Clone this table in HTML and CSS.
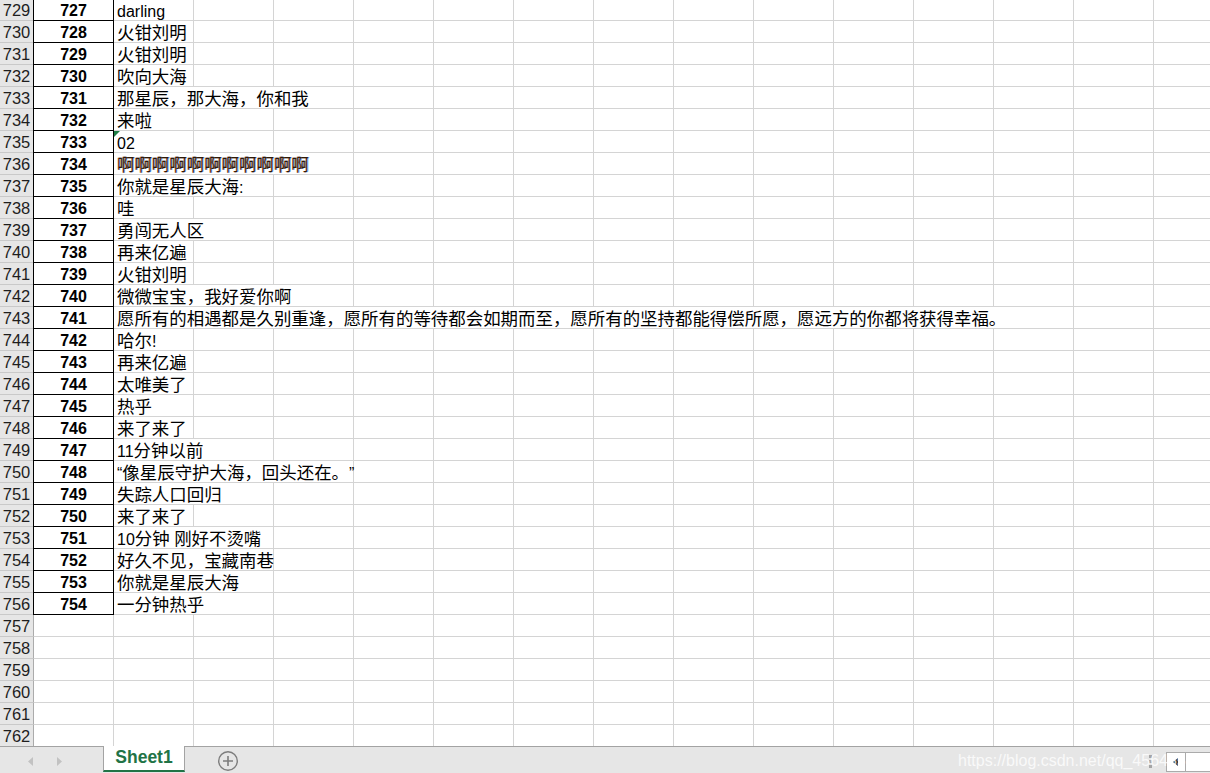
FILE: index.html
```html
<!DOCTYPE html>
<html lang="zh">
<head>
<meta charset="utf-8">
<title>Sheet1</title>
<link rel="stylesheet" href="styles.css">
</head>
<body>
<div class="app">
  <div class="sheet">
    <div class="rows">
      <div class="row"><div class="rh">729</div><div class="a">727</div><div class="b"><span class="lat">darling</span></div></div>
      <div class="row"><div class="rh">730</div><div class="a">728</div><div class="b">火钳刘明</div></div>
      <div class="row"><div class="rh">731</div><div class="a">729</div><div class="b">火钳刘明</div></div>
      <div class="row"><div class="rh">732</div><div class="a">730</div><div class="b">吹向大海</div></div>
      <div class="row"><div class="rh">733</div><div class="a">731</div><div class="b span3">那星辰，那大海，你和我</div></div>
      <div class="row"><div class="rh">734</div><div class="a">732</div><div class="b">来啦</div></div>
      <div class="row"><div class="rh">735</div><div class="a">733</div><div class="b flag"><span class="lat">02</span></div></div>
      <div class="row"><div class="rh">736</div><div class="a">734</div><div class="b span3 fringe">啊啊啊啊啊啊啊啊啊啊啊</div></div>
      <div class="row"><div class="rh">737</div><div class="a">735</div><div class="b span2">你就是星辰大海<span class="lat">:</span></div></div>
      <div class="row"><div class="rh">738</div><div class="a">736</div><div class="b">哇</div></div>
      <div class="row"><div class="rh">739</div><div class="a">737</div><div class="b span2">勇闯无人区</div></div>
      <div class="row"><div class="rh">740</div><div class="a">738</div><div class="b">再来亿遍</div></div>
      <div class="row"><div class="rh">741</div><div class="a">739</div><div class="b">火钳刘明</div></div>
      <div class="row"><div class="rh">742</div><div class="a">740</div><div class="b span3">微微宝宝，我好爱你啊</div></div>
      <div class="row"><div class="rh">743</div><div class="a">741</div><div class="b span12">愿所有的相遇都是久别重逢，愿所有的等待都会如期而至，愿所有的坚持都能得偿所愿，愿远方的你都将获得幸福。</div></div>
      <div class="row"><div class="rh">744</div><div class="a">742</div><div class="b">哈尔<span class="lat">!</span></div></div>
      <div class="row"><div class="rh">745</div><div class="a">743</div><div class="b">再来亿遍</div></div>
      <div class="row"><div class="rh">746</div><div class="a">744</div><div class="b">太唯美了</div></div>
      <div class="row"><div class="rh">747</div><div class="a">745</div><div class="b">热乎</div></div>
      <div class="row"><div class="rh">748</div><div class="a">746</div><div class="b">来了来了</div></div>
      <div class="row"><div class="rh">749</div><div class="a">747</div><div class="b span2"><span class="lat">11</span>分钟以前</div></div>
      <div class="row"><div class="rh">750</div><div class="a">748</div><div class="b span3"><span class="lat">“</span>像星辰守护大海，回头还在。<span class="lat">”</span></div></div>
      <div class="row"><div class="rh">751</div><div class="a">749</div><div class="b span2">失踪人口回归</div></div>
      <div class="row"><div class="rh">752</div><div class="a">750</div><div class="b">来了来了</div></div>
      <div class="row"><div class="rh">753</div><div class="a">751</div><div class="b span2"><span class="lat">10</span>分钟<span class="lat"> </span>刚好不烫嘴</div></div>
      <div class="row"><div class="rh">754</div><div class="a">752</div><div class="b span2">好久不见，宝藏南巷</div></div>
      <div class="row"><div class="rh">755</div><div class="a">753</div><div class="b span2">你就是星辰大海</div></div>
      <div class="row"><div class="rh">756</div><div class="a">754</div><div class="b span2">一分钟热乎</div></div>
      <div class="row"><div class="rh">757</div><div class="a empty"></div></div>
      <div class="row"><div class="rh">758</div><div class="a empty"></div></div>
      <div class="row"><div class="rh">759</div><div class="a empty"></div></div>
      <div class="row"><div class="rh">760</div><div class="a empty"></div></div>
      <div class="row"><div class="rh">761</div><div class="a empty"></div></div>
      <div class="row"><div class="rh">762</div><div class="a empty"></div></div>
    </div>
  </div>
  <div class="tabbar">
    <div class="nav">
      <svg width="103" height="26" viewBox="0 0 103 26"><polygon points="33,10 28,14.5 33,19" fill="#c2c2c2"/><polygon points="57,10 62,14.5 57,19" fill="#c2c2c2"/></svg>
    </div>
    <div class="tab">Sheet1</div>
    <div class="add">
      <svg width="22" height="22" viewBox="0 0 22 22"><circle cx="11" cy="11" r="9.3" fill="none" stroke="#7d7d7d" stroke-width="1.4"/><path d="M11 6v10M6 11h10" stroke="#7d7d7d" stroke-width="1.6"/></svg>
    </div>
    <div class="right">
      <div class="dots"><i></i><i></i><i></i></div>
      <div class="hscroll">
        <div class="hbtn"><svg width="8" height="10" viewBox="0 0 8 10"><polygon points="6,1 1,5 6,9" fill="#3d3d3d"/></svg></div>
        <div class="hthumb"></div>
      </div>
    </div>
    <div class="watermark">https://blog.csdn.net/qq_45645521</div>
  </div>
</div>
</body>
</html>
```

FILE: styles.css
```css
* { box-sizing: border-box; }
html, body { margin: 0; padding: 0; }
body {
  width: 1210px;
  height: 773px;
  overflow: hidden;
  background: #ffffff;
  font-family: "Liberation Sans", "Noto Sans CJK SC", sans-serif;
  text-spacing-trim: space-all;
}
.app {
  display: flex;
  flex-direction: column;
  height: 773px;
}
.sheet {
  height: 746px;
  overflow: hidden;
  flex: none;
}
.rows {
  margin-top: -1px;
}
.row {
  display: grid;
  grid-template-columns: 33px 81px repeat(14, 80px);
  grid-template-rows: 22px;
  height: 22px;
  width: 1210px;
  background-image:
    linear-gradient(to top, #d4d4d4 1px, transparent 1px),
    repeating-linear-gradient(to right, transparent 0 79px, #d4d4d4 79px 80px);
  background-position: 0 0, 34px 0;
}
.rh {
  height: 22px;
  background: #e6e6e6;
  border-bottom: 1px solid #c9c9c9;
  color: #1e1e1e;
  font-size: 16.5px;
  line-height: 19px;
  padding-top: 2px;
  text-align: center;
}
.a {
  height: 22px;
  border-left: 1px solid #000;
  border-right: 1px solid #000;
  border-bottom: 1px solid #000;
  background: #fff;
  font-weight: bold;
  font-size: 16px;
  line-height: 20px;
  padding-top: 1.5px;
  text-align: center;
  color: #000;
}
.a.empty {
  border-left-color: #ababab;
  border-right: none;
  border-bottom-color: #d4d4d4;
  background: transparent;
}
.b {
  position: relative;
  height: 22px;
  background: #fff;
  border-right: 1px solid #d4d4d4;
  border-bottom: 1px solid #d4d4d4;
  padding-left: 3px;
  padding-top: 1.5px;
  font-size: 17.45px;
  line-height: 20px;
  white-space: nowrap;
  color: #000;
}
.lat { font-size: 16px; }
.span2 { grid-column: span 2; }
.span3 { grid-column: span 3; }
.span12 { grid-column: span 12; }
.flag::before {
  content: "";
  position: absolute;
  left: 0;
  top: 0;
  border-top: 6px solid #1e7e45;
  border-right: 6px solid transparent;
}
.fringe {
  color: #2e1a08;
  text-shadow: -0.6px 0 rgba(214, 90, 10, 0.6), 0.8px 0 rgba(20, 110, 230, 0.6);
}
.tabbar {
  position: relative;
  flex: 1;
  display: flex;
  align-items: flex-start;
  background: #e6e6e6;
  border-top: 1px solid #a3a3a3;
}
.nav {
  width: 103px;
  height: 26px;
  flex: none;
}
.nav svg { display: block; }
.tab {
  flex: none;
  width: 82px;
  height: 26px;
  margin-top: -1px;
  background: #fff;
  border-left: 1px solid #a3a3a3;
  border-right: 1px solid #a3a3a3;
  border-bottom: 2px solid #217346;
  color: #217346;
  font-weight: bold;
  font-size: 17.5px;
  line-height: 23px;
  text-align: center;
}
.add {
  margin-left: 32px;
  margin-top: 3px;
  width: 22px;
  height: 22px;
}
.add svg { display: block; }
.right {
  margin-left: auto;
  display: flex;
  align-items: flex-start;
}
.dots {
  display: flex;
  flex-direction: column;
  gap: 2px;
  margin-top: 8px;
  margin-right: 14px;
}
.dots i {
  display: block;
  width: 3px;
  height: 3px;
  background: #a5a5a5;
}
.hscroll {
  display: flex;
  margin-top: 5px;
  width: 44px;
  height: 20px;
  background: #fff;
  border: 1px solid #ababab;
  border-right: none;
}
.hbtn {
  width: 19px;
  border-right: 1px solid #ababab;
  display: flex;
  align-items: center;
  justify-content: center;
}
.hbtn svg { display: block; }
.hthumb { flex: 1; }
.watermark {
  position: absolute;
  left: 958px;
  top: 5px;
  font-size: 16px;
  line-height: 18px;
  color: rgba(255, 255, 255, 0.78);
  white-space: nowrap;
}
```
